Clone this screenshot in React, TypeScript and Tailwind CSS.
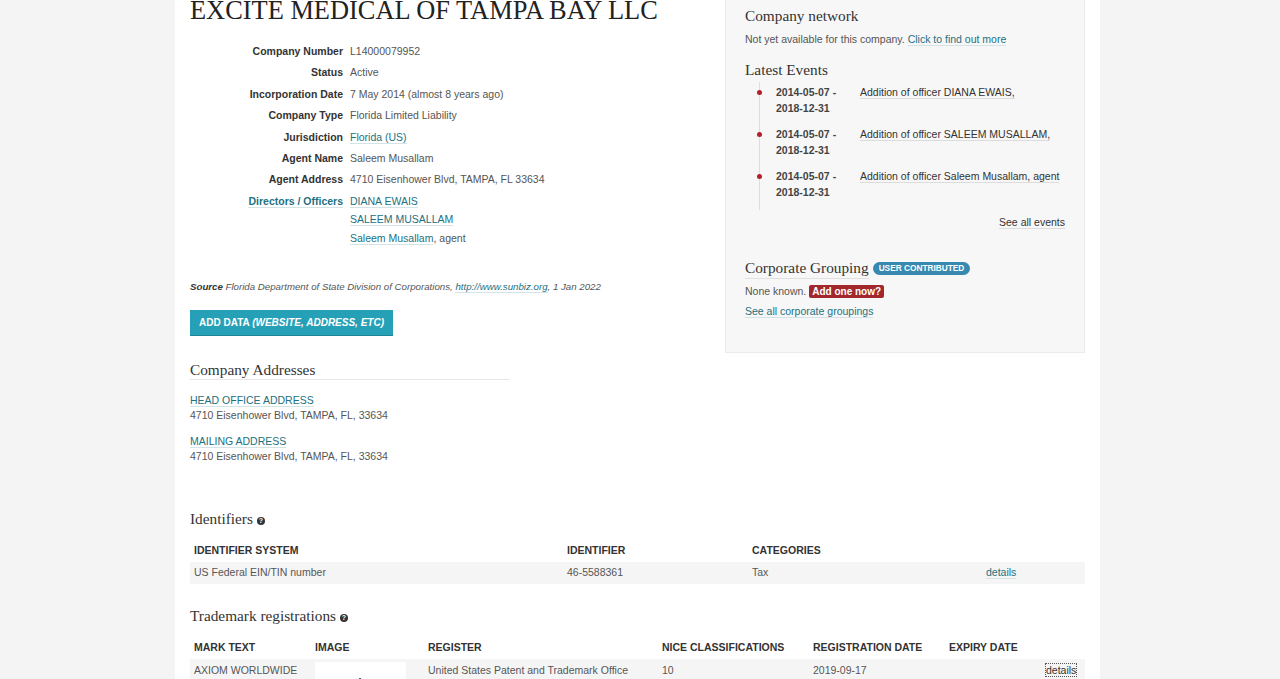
import React from 'react';

const sans = { fontFamily: '"Liberation Sans", Arial, sans-serif' };
const serif = { fontFamily: '"Liberation Serif", "Times New Roman", serif' };

const linkCls = 'text-[#23707f] border-b border-[#d3e3e8]';

const details: { label: string; value: React.ReactNode }[] = [
  { label: 'Company Number', value: 'L14000079952' },
  { label: 'Status', value: 'Active' },
  { label: 'Incorporation Date', value: '7 May 2014 (almost 8 years ago)' },
  { label: 'Company Type', value: 'Florida Limited Liability' },
  { label: 'Jurisdiction', value: <a className={linkCls}>Florida (US)</a> },
  { label: 'Agent Name', value: 'Saleem Musallam' },
  { label: 'Agent Address', value: '4710 Eisenhower Blvd, TAMPA, FL 33634' },
];

const events = [
  'Addition of officer DIANA EWAIS,',
  'Addition of officer SALEEM MUSALLAM,',
  'Addition of officer Saleem Musallam, agent',
];

const HelpIcon = () => (
  <span
    className="inline-flex items-center justify-center w-[8px] h-[8px] rounded-full bg-[#333] text-white text-[7px] font-bold leading-none ml-[4px] align-middle"
    style={sans}
  >
    ?
  </span>
);

const SectionTitle = ({ children }: { children: React.ReactNode }) => (
  <h2 className="text-[15.3px] leading-[20px] text-[#333]" style={serif}>
    {children}
  </h2>
);

export default function App() {
  return (
    <div className="h-[679px] overflow-hidden bg-[#f4f4f4]" style={sans}>
      <div className="w-[925px] ml-[175px] bg-white px-[15px] min-h-[679px]">
        <div className="grid grid-cols-[520px_360px] gap-x-[15px] items-start">
          {/* Left column */}
          <div>
            <h1 className="-mt-[6px] text-[26.4px] leading-[32px] text-[#222] whitespace-nowrap" style={serif}>
              EXCITE MEDICAL OF TAMPA BAY LLC
            </h1>

            <dl className="mt-[15px] grid grid-cols-[153px_1fr] gap-x-[7px] text-[10.5px] leading-[21.4px]">
              {details.map((d) => (
                <React.Fragment key={d.label}>
                  <dt className="text-right font-bold text-[#333]">{d.label}</dt>
                  <dd className="text-[#555]">{d.value}</dd>
                </React.Fragment>
              ))}
              <dt className="text-right font-bold">
                <span className={linkCls}>Directors / Officers</span>
              </dt>
              <dd className="text-[#555] leading-[18.5px] pt-[1px]">
                <div>
                  <a className={linkCls}>DIANA EWAIS</a>
                </div>
                <div>
                  <a className={linkCls}>SALEEM MUSALLAM</a>
                </div>
                <div>
                  <a className={linkCls}>Saleem Musallam</a>, agent
                </div>
              </dd>
            </dl>

            <p className="mt-[32px] text-[9.7px] leading-[16px] italic text-[#555]">
              <span className="font-bold text-[#333]">Source</span> Florida Department of State Division of
              Corporations, <a className={linkCls}>http://www.sunbiz.org</a>, 1 Jan 2022
            </p>

            <button className="mt-[15px] h-[26px] px-[9px] bg-[#26a0b6] text-white text-[10px] font-bold uppercase border-b border-[#1d8698]">
              Add data <span className="italic">(website, address, etc)</span>
            </button>

            <div className="mt-[25px] w-[320px] border-b border-[#e6e6e6]">
              <h2 className="text-[15.3px] leading-[18px] text-[#333]" style={serif}>
                Company Addresses
              </h2>
            </div>
            <div className="mt-[13px] text-[10.5px] leading-[15px] text-[#555]">
              <a className={linkCls}>HEAD OFFICE ADDRESS</a>
              <div>4710 Eisenhower Blvd, TAMPA, FL, 33634</div>
              <div className="mt-[11px]">
                <a className={linkCls}>MAILING ADDRESS</a>
              </div>
              <div>4710 Eisenhower Blvd, TAMPA, FL, 33634</div>
            </div>
          </div>

          {/* Right panel */}
          <div className="-mt-[20px] bg-[#f7f7f7] border border-[#ebebeb] px-[19px] pt-[25px] pb-[32px]">
            <SectionTitle>Company network</SectionTitle>
            <p className="mt-[5px] text-[10.5px] leading-[16px] text-[#555]">
              Not yet available for this company. <a className={linkCls}>Click to find out more</a>
            </p>

            <div className="mt-[13px]">
              <SectionTitle>Latest Events</SectionTitle>
            </div>
            <ul className="mt-[2px] ml-[14px] border-l border-[#ddd] pb-[10px] pt-[1px]">
              {events.map((e) => (
                <li key={e} className="relative flex pl-[16px] mt-[10px] first:mt-[1px] text-[10.5px] leading-[16px]">
                  <span className="absolute -left-[3px] top-[6px] w-[5px] h-[5px] rounded-full bg-[#b3202c]" />
                  <span className="w-[84px] shrink-0 font-bold text-[#444]">
                    2014-05-07 -<br />
                    2018-12-31
                  </span>
                  <span>
                    <a className="text-[#333] border-b border-[#dcdcdc]">{e}</a>
                  </span>
                </li>
              ))}
            </ul>
            <div className="mt-[4px] text-right text-[10.5px] leading-[16px]">
              <a className="text-[#333] border-b border-[#dcdcdc]">See all events</a>
            </div>

            <div className="mt-[28px] flex items-center">
              <h2 className="text-[15.3px] leading-[20px] text-[#333] border-b border-[#e0e0e0]" style={serif}>
                Corporate Grouping
              </h2>
              <span className="ml-[4px] rounded-full bg-[#3789b0] text-white text-[8.3px] font-bold uppercase px-[6px] leading-[13px]">
                User contributed
              </span>
            </div>
            <p className="mt-[3px] text-[10.5px] leading-[18px] text-[#555]">
              None known.{' '}
              <span className="bg-[#a3282e] text-white font-bold text-[10px] px-[3px] py-[1px] rounded-[2px]">
                Add one now?
              </span>
            </p>
            <div className="mt-[1px] text-[10.5px] leading-[18px]">
              <a className={linkCls}>See all corporate groupings</a>
            </div>
          </div>
        </div>

        {/* Identifiers */}
        <div className="mt-[45px]">
          <SectionTitle>
            Identifiers
            <HelpIcon />
          </SectionTitle>
        </div>
        <div className="mt-[11px] text-[10.5px]">
          <div className="grid grid-cols-[373px_185px_234px_103px] h-[22px] items-center text-[10.5px] font-bold uppercase text-[#333]">
            <div className="px-[4px]">Identifier System</div>
            <div className="px-[4px]">Identifier</div>
            <div className="px-[4px]">Categories</div>
            <div />
          </div>
          <div className="grid grid-cols-[373px_185px_234px_103px] h-[22px] items-center bg-[#f5f5f5] text-[#555]">
            <div className="px-[4px]">US Federal EIN/TIN number</div>
            <div className="px-[4px]">46-5588361</div>
            <div className="px-[4px]">Tax</div>
            <div className="px-[4px]">
              <a className={linkCls}>details</a>
            </div>
          </div>
        </div>

        {/* Trademarks */}
        <div className="mt-[22px]">
          <SectionTitle>
            Trademark registrations
            <HelpIcon />
          </SectionTitle>
        </div>
        <div className="mt-[11px] text-[10.5px]">
          <div className="grid grid-cols-[121px_113px_234px_151px_136px_97px_43px] h-[22px] items-center text-[10.5px] font-bold uppercase text-[#333]">
            <div className="px-[4px]">Mark Text</div>
            <div className="px-[4px]">Image</div>
            <div className="px-[4px]">Register</div>
            <div className="px-[4px]">Nice Classifications</div>
            <div className="px-[4px]">Registration Date</div>
            <div className="px-[4px]">Expiry Date</div>
            <div />
          </div>
          <div className="grid grid-cols-[121px_113px_234px_151px_136px_97px_43px] items-start bg-[#f5f5f5] text-[#555] h-[60px]">
            <div className="px-[4px] leading-[22px]">AXIOM WORLDWIDE</div>
            <div className="px-[4px] pt-[3px]">
              <div className="w-[91px] h-[50px] bg-white overflow-hidden">
                <div className="pt-[12px] text-center text-[12px] font-bold text-[#222]" style={serif}>
                  Axiom Worldwide
                </div>
              </div>
            </div>
            <div className="px-[4px] leading-[22px]">United States Patent and Trademark Office</div>
            <div className="px-[4px] leading-[22px]">10</div>
            <div className="px-[4px] leading-[22px]">2019-09-17</div>
            <div className="px-[4px] leading-[22px]" />
            <div className="px-[4px] leading-[22px]">
              <a className="text-[#333] outline outline-1 outline-dotted outline-[#555]">details</a>
            </div>
          </div>
        </div>
      </div>
    </div>
  );
}
